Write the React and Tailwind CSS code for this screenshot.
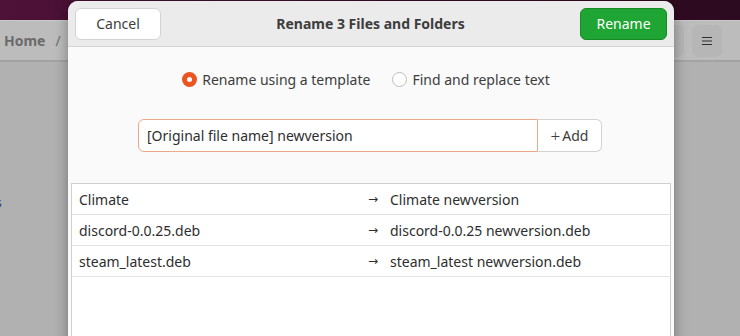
import React from "react";

const ROWS = [
    { from: "Climate", to: "Climate newversion" },
    { from: "discord-0.0.25.deb", to: "discord-0.0.25 newversion.deb" },
    { from: "steam_latest.deb", to: "steam_latest newversion.deb" },
];

const MenuIcon = () => (
    <svg width="12" height="10" viewBox="0 0 12 10" fill="none" stroke="#2e2e2e" strokeWidth="1.2">
        <path d="M1 1.5h10M1 5h10M1 8.5h10" />
    </svg>
);

const App = () => {
    return (
        <div className="relative h-[336px] w-[740px] overflow-hidden bg-[#b1b1b1] font-['Noto_Sans',sans-serif] text-[14px] text-[#3d3d3d]">
            {/* dimmed window behind the dialog */}
            <div className="flex h-full flex-col">
                <div className="h-[20px] bg-gradient-to-r from-[#4e1138] to-[#2c0a1f]" />
                <div className="flex h-[42px] items-center justify-between border-t border-[#c9c9c9] border-b-2 border-b-[#a3a3a3] bg-[#bcbcbc] pl-[4px] pr-[18px]">
                    <div className="flex items-center gap-[10px] text-[14px] font-bold text-[#6b6b6b]">
                        <span>Home</span>
                        <span className="font-normal">/</span>
                    </div>
                    <div className="flex items-center gap-[8px]">
                        <div className="h-[32px] w-[28px] rounded-[6px] bg-[#b6b6b6]" />
                        <div className="flex h-[32px] w-[30px] items-center justify-center rounded-[6px] bg-[#b6b6b6]">
                            <MenuIcon />
                        </div>
                    </div>
                </div>
                <div className="flex-1 pt-[132px] text-[12px] text-[#2a3f7a]">
                    <span className="-ml-[4px]">s</span>
                </div>
            </div>

            {/* dialog */}
            <div className="absolute left-[68px] top-[1px] flex h-[360px] w-[606px] flex-col overflow-hidden rounded-t-[10px] bg-[#fafafa] shadow-[0_0_14px_rgba(0,0,0,0.35)]">
                <div className="flex h-[46px] shrink-0 items-center justify-between border-b border-[#d4d4d4] bg-[#ebebeb] px-[7px]">
                    <button className="h-[32px] w-[86px] rounded-[6px] border border-[#d2d2d2] bg-white text-[14px] text-[#3d3d3d]">
                        Cancel
                    </button>
                    <div className="text-[14px] font-bold text-[#3d3d3d]">Rename 3 Files and Folders</div>
                    <button className="h-[32px] w-[87px] rounded-[6px] border border-[#178a28] bg-[#1fa533] text-[14px] text-white">
                        Rename
                    </button>
                </div>

                <div className="flex flex-1 flex-col">
                    <div className="flex h-[72px] items-center justify-center gap-[22px] pb-[8px] pr-[10px]">
                        <label className="flex items-center gap-[5px]">
                            <span className="flex h-[15px] w-[15px] items-center justify-center rounded-full bg-[#e95420]">
                                <span className="h-[5px] w-[5px] rounded-full bg-white" />
                            </span>
                            Rename using a template
                        </label>
                        <label className="flex items-center gap-[5px]">
                            <span className="h-[15px] w-[15px] rounded-full border border-[#bdbdbd] bg-white" />
                            Find and replace text
                        </label>
                    </div>

                    <div className="flex justify-center pr-[2px]">
                        <div className="flex h-[33px] w-[400px] items-center rounded-l-[6px] border border-[#eda88a] bg-white px-[8px] text-[#2e2e2e]">
                            [Original file name] newversion
                        </div>
                        <div className="flex h-[33px] w-[64px] items-center justify-center gap-[2px] rounded-r-[6px] border border-l-0 border-[#d2d2d2] bg-white">
                            <span className="text-[17px] font-light leading-none">+</span>
                            <span>Add</span>
                        </div>
                    </div>

                    <div className="mx-[3px] mt-[31px] flex-1 border border-[#d0d0d0] bg-white text-[#2e2e2e]">
                        {ROWS.map((r) => (
                            <div key={r.from} className="flex h-[31px] items-center border-b border-[#e4e4e4] pl-[7px]">
                                <span className="w-[289px]">{r.from}</span>
                                <span className="w-[22px] font-['DejaVu_Sans',sans-serif] text-[12px]">→</span>
                                <span>{r.to}</span>
                            </div>
                        ))}
                    </div>
                </div>
            </div>
        </div>
    );
};

export default App;
